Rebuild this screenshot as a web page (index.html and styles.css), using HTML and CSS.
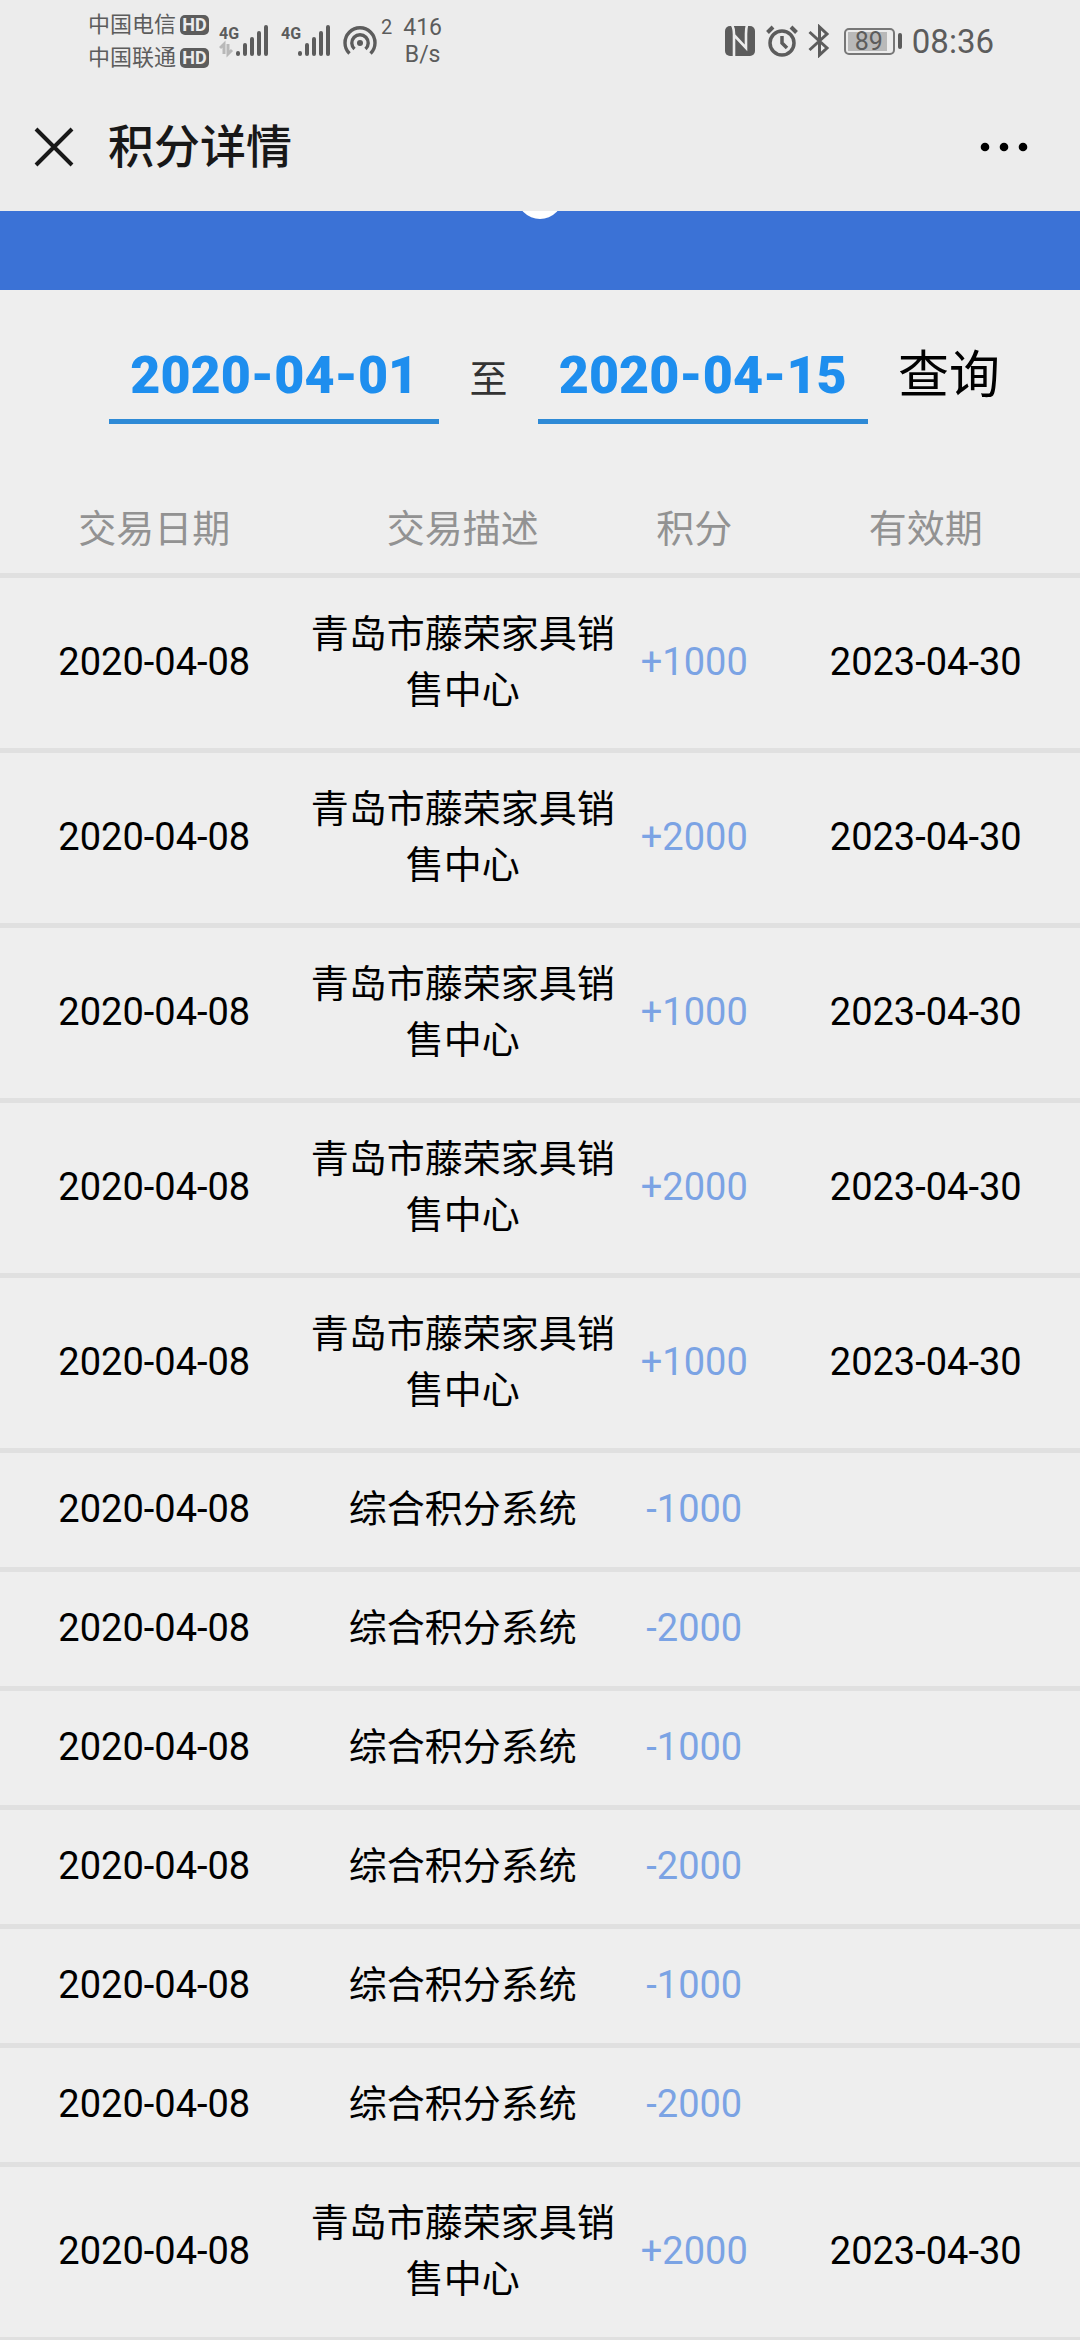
FILE: index.html
```html
<!DOCTYPE html>
<html lang="zh-CN">
<head>
    <meta charset="UTF-8">
    <meta name="viewport" content="width=device-width, initial-scale=1.0">
    <title>积分详情</title>
    <link rel="stylesheet" href="styles.css">
</head>
<body>
    <header class="top">
        <div class="status-bar">
            <div class="carriers">
                <div class="carrier">中国电信<span class="hd">HD</span></div>
                <div class="carrier">中国联通<span class="hd">HD</span></div>
            </div>
            <svg class="signal" width="52" height="34" viewBox="0 0 52 34">
                <text x="0" y="15" class="net">4G</text>
                <path d="M1 24l4-4v10M9 20v10l4-4" fill="none" stroke="#b8b8b8" stroke-width="3"/>
                <path d="M19 29v1M26 21v9M33 15v15M40 9v21M47 3v27" fill="none" stroke="#5c5c5c" stroke-width="4" stroke-linecap="round"/>
            </svg>
            <svg class="signal" width="52" height="34" viewBox="0 0 52 34">
                <text x="0" y="15" class="net">4G</text>
                <path d="M19 29v1M26 21v9M33 15v15M40 9v21M47 3v27" fill="none" stroke="#5c5c5c" stroke-width="4" stroke-linecap="round"/>
            </svg>
            <div class="hotspot">
                <svg width="34" height="32" viewBox="0 0 34 32">
                    <circle cx="17" cy="18" r="3" fill="#5c5c5c"/>
                    <path d="M6.500 28.500A15 15 0 1 1 27.500 28.500M11.500 24A8.200 8.200 0 1 1 22.500 24" fill="none" stroke="#5c5c5c" stroke-width="3.400"/>
                </svg>
                <span class="count">2</span>
            </div>
            <div class="speed">416<br>B/s</div>
            <div class="status-right">
                <svg width="32" height="32" viewBox="0 0 32 32">
                    <rect x="1" y="1" width="30" height="30" rx="5" fill="#5c5c5c"/>
                    <path d="M8 0Q10 3 10 9V32M10 10L22 23V9Q22 4 23 0" fill="none" stroke="#ececec" stroke-width="2.600"/>
                </svg>
                <svg width="32" height="32" viewBox="0 0 32 32">
                    <g fill="none" stroke="#5c5c5c">
                        <circle cx="16" cy="18" r="12" stroke-width="3.500"/>
                        <path d="M16 11v7l5 5" stroke-width="3.500"/>
                        <path d="M1.500 7.500L7 2M25 2l5.500 5.500" stroke-width="4"/>
                    </g>
                </svg>
                <svg width="22" height="34" viewBox="0 0 22 34">
                    <path d="M1.500 8L19 24L11.500 31V3L19 10L1.500 26" fill="none" stroke="#5c5c5c" stroke-width="3"/>
                </svg>
                <div class="battery"><span class="level">89</span></div>
                <span class="clock">08:36</span>
            </div>
        </div>
        <div class="title-bar">
            <button type="button" class="icon-button" aria-label="关闭">
                <svg width="40" height="40" viewBox="0 0 40 40">
                    <path d="M2 2L38 38M38 2L2 38" stroke="#181818" stroke-width="4"/>
                </svg>
            </button>
            <h1>积分详情</h1>
            <button type="button" class="icon-button more" aria-label="更多">
                <svg width="48" height="12" viewBox="0 0 48 12">
                    <circle cx="5" cy="6" r="4.300"/>
                    <circle cx="24" cy="6" r="4.300"/>
                    <circle cx="43" cy="6" r="4.300"/>
                </svg>
            </button>
        </div>
    </header>

    <main class="content">
        <div class="banner">
            <svg width="46" height="8" viewBox="0 0 46 8">
                <circle cx="23" cy="-15" r="23" fill="#fff"/>
            </svg>
        </div>

        <form class="filter">
            <input type="text" class="date" value="2020-04-01" aria-label="开始日期">
            <span class="to">至</span>
            <input type="text" class="date" value="2020-04-15" aria-label="结束日期">
            <button type="button" class="query">查询</button>
        </form>

        <table class="records">
            <colgroup>
                <col class="wide">
                <col class="wide">
                <col class="narrow">
                <col class="wide">
            </colgroup>
            <thead>
                <tr><th>交易日期</th><th>交易描述</th><th>积分</th><th>有效期</th></tr>
            </thead>
            <tbody>
                <tr><td>2020-04-08</td><td>青岛市藤荣家具销售中心</td><td class="points">+1000</td><td>2023-04-30</td></tr>
                <tr><td>2020-04-08</td><td>青岛市藤荣家具销售中心</td><td class="points">+2000</td><td>2023-04-30</td></tr>
                <tr><td>2020-04-08</td><td>青岛市藤荣家具销售中心</td><td class="points">+1000</td><td>2023-04-30</td></tr>
                <tr><td>2020-04-08</td><td>青岛市藤荣家具销售中心</td><td class="points">+2000</td><td>2023-04-30</td></tr>
                <tr><td>2020-04-08</td><td>青岛市藤荣家具销售中心</td><td class="points">+1000</td><td>2023-04-30</td></tr>
                <tr><td>2020-04-08</td><td>综合积分系统</td><td class="points">-1000</td><td></td></tr>
                <tr><td>2020-04-08</td><td>综合积分系统</td><td class="points">-2000</td><td></td></tr>
                <tr><td>2020-04-08</td><td>综合积分系统</td><td class="points">-1000</td><td></td></tr>
                <tr><td>2020-04-08</td><td>综合积分系统</td><td class="points">-2000</td><td></td></tr>
                <tr><td>2020-04-08</td><td>综合积分系统</td><td class="points">-1000</td><td></td></tr>
                <tr><td>2020-04-08</td><td>综合积分系统</td><td class="points">-2000</td><td></td></tr>
                <tr><td>2020-04-08</td><td>青岛市藤荣家具销售中心</td><td class="points">+2000</td><td>2023-04-30</td></tr>
            </tbody>
        </table>
    </main>
</body>
</html>
```

FILE: styles.css
```css
* {
    box-sizing: border-box;
}
body {
    display: flex;
    flex-direction: column;
    height: 100vh;
    margin: 0;
    background-color: #eeeeee;
    color: #000;
    font-family: Roboto, "Noto Sans CJK SC", sans-serif;
    font-size: 38px;
}
svg {
    display: block;
    flex: none;
}
button {
    padding: 0;
    border: none;
    background: none;
    color: inherit;
    font-family: inherit;
    cursor: pointer;
}
.top {
    flex: none;
    background-color: #ececec;
}
.content {
    flex: 1;
    min-height: 0;
    overflow-y: auto;
    scrollbar-width: none;
}

/* status bar */
.status-bar {
    display: flex;
    align-items: center;
    height: 82px;
    padding: 0 86px 0 88px;
    color: #5c5c5c;
}
.carrier {
    display: flex;
    align-items: center;
    gap: 4px;
    font-size: 22px;
    font-weight: 400;
    line-height: 33px;
}
.hd {
    width: 29px;
    border-radius: 5px;
    background-color: #5c5c5c;
    color: #ececec;
    font-size: 18px;
    font-weight: 700;
    line-height: 20px;
    text-align: center;
}
.signal {
    margin-left: 10px;
}
.net {
    fill: #5c5c5c;
    font-size: 16px;
    font-weight: 700;
}
.hotspot {
    display: flex;
    margin-left: 10px;
}
.count {
    margin-left: 4px;
    font-size: 20px;
    line-height: 1;
    margin-top: -8px;
}
.speed {
    margin-left: 11px;
    font-size: 23px;
    line-height: 27px;
    text-align: center;
}
.status-right {
    display: flex;
    align-items: center;
    gap: 10px;
    margin-left: auto;
}
.battery {
    display: flex;
    align-items: center;
    gap: 3px;
    margin-left: 4px;
}
.battery::after {
    content: "";
    width: 4px;
    height: 16px;
    border-radius: 2px;
    background-color: #5c5c5c;
}
.level {
    width: 51px;
    padding-right: 1px;
    border: 2px solid #777;
    border-radius: 5px;
    background: linear-gradient(#b9b9b9, #b9b9b9) 2px 2px / 39px 19px no-repeat;
    font-size: 25px;
    line-height: 23px;
    text-align: center;
}
.clock {
    font-size: 33px;
}

/* title bar */
.title-bar {
    display: flex;
    align-items: center;
    height: 129px;
    padding: 0 52px 0 34px;
}
.title-bar h1 {
    margin: 0 0 0 34px;
    color: #181818;
    font-size: 46px;
    font-weight: 500;
    line-height: 60px;
}
.more {
    margin-left: auto;
}

.banner {
    display: flex;
    justify-content: center;
    height: 79px;
    background-color: #3b72d6;
}

/* date filter */
.filter {
    display: flex;
    align-items: center;
    gap: 30px;
    padding: 36px 80px 0 109px;
}
.date {
    flex: 1;
    min-width: 0;
    height: 98px;
    padding: 5px 0 0;
    border: none;
    border-bottom: 5px solid #2e8ad6;
    border-radius: 0;
    background: none;
    color: #1e8eee;
    font-family: inherit;
    font-size: 52px;
    font-weight: 900;
    text-align: center;
}
.to {
    color: #333;
}
.query {
    padding-bottom: 8px;
    font-size: 51px;
}

/* records */
.records {
    width: 100%;
    margin-top: 60px;
    border-collapse: separate;
    border-spacing: 0;
    table-layout: fixed;
}
.wide {
    width: 28.57%;
}
.narrow {
    width: 14.29%;
}
th, td {
    padding: 28px 0 30px;
    border-bottom: 5px solid #e0e0e0;
    font-weight: 400;
    line-height: 56px;
    text-align: center;
}
th {
    padding: 17px 0 16px;
    color: #929292;
}
.points {
    color: #7ba3e4;
}
```
